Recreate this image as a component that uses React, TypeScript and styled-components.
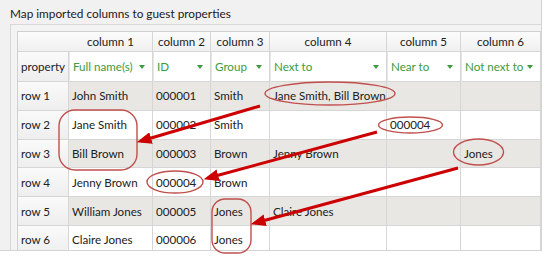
import styled, { createGlobalStyle } from 'styled-components';

const GlobalStyle = createGlobalStyle`
  html, body {
    margin: 0;
    padding: 0;
    background: #ffffff;
  }
  body {
    font-family: Lato, 'Noto Sans', sans-serif;
  }
`;

const Page = styled.div`
  position: relative;
  width: 546px;
  height: 256px;
  overflow: hidden;
  background: #ffffff;
`;

const Dialog = styled.div`
  width: 542px;
  height: 251px;
  overflow: hidden;
  background: #f1f1f1;
  border-right: 1px solid #d4d4d4;
  border-bottom: 1px solid #d4d4d4;
  box-sizing: border-box;
  display: flex;
  flex-direction: column;
`;

const Title = styled.div`
  flex-shrink: 0;
  height: 24px;
  padding: 3px 0 0 10px;
  box-sizing: border-box;
  display: flex;
  align-items: center;
  font-size: 11.8px;
  color: #1a1a1a;
`;

const GroupBox = styled.div`
  flex-shrink: 0;
  margin-left: 10px;
  border-left: 1px solid #d8d8d8;
  border-top: 1px solid #d8d8d8;
  padding: 6px 0 0 6px;
  background: #f3f3f3;
`;

const Grid = styled.div`
  display: grid;
  grid-template-columns: 51px 84px 58px 59px 117px 74px 80px;
  grid-template-rows: 20px 30px repeat(6, 28.8px);
  border-left: 1px solid #d0d0d0;
  border-top: 1px solid #d0d0d0;
  width: 524px;
  box-sizing: border-box;
  font-size: 11.6px;
  color: #222222;
`;

type CellKind = 'corner' | 'colhead' | 'prop' | 'combo' | 'rowhead' | 'body';

const Cell = styled.div<{ $kind: CellKind; $shade?: boolean }>`
  box-sizing: border-box;
  display: flex;
  align-items: center;
  white-space: nowrap;
  overflow: hidden;
  border-bottom: 1px solid #d6d6d6;
  border-right: ${(p) => (p.$kind === 'corner' ? 'none' : '1px solid #d6d6d6')};
  justify-content: ${(p) => (p.$kind === 'colhead' ? 'center' : 'flex-start')};
  padding-left: ${(p) => (p.$kind === 'colhead' ? '0' : '3px')};
  padding-right: ${(p) => (p.$kind === 'combo' ? '7px' : '0')};
  background: ${(p) => {
    if (p.$kind === 'corner' || p.$kind === 'colhead')
      return 'linear-gradient(#fcfcfc, #f0f0f0)';
    if (p.$kind === 'prop' || p.$kind === 'rowhead')
      return 'linear-gradient(#fafafa, #eeeeee)';
    if (p.$kind === 'combo') return '#ffffff';
    return p.$shade ? '#e9e7e4' : '#ffffff';
  }};
  color: ${(p) => (p.$kind === 'combo' ? '#3d9b3d' : '#222222')};
  border-left: ${(p) => (p.$kind === 'combo' ? '1px solid #e6e6e6' : 'none')};
`;

const ComboLabel = styled.span`
  flex: 1;
`;

const Caret = styled.span`
  width: 0;
  height: 0;
  border-left: 3.5px solid transparent;
  border-right: 3.5px solid transparent;
  border-top: 4px solid #3d9b3d;
`;

const Overlay = styled.svg`
  position: absolute;
  left: 0;
  top: 0;
  pointer-events: none;
`;

const columns = ['column 1', 'column 2', 'column 3', 'column 4', 'column 5', 'column 6'];
const mappings = ['Full name(s)', 'ID', 'Group', 'Next to', 'Near to', 'Not next to'];

const rows = [
  ['John Smith', '000001', 'Smith', 'Jane Smith, Bill Brown', '', ''],
  ['Jane Smith', '000002', 'Smith', '', '000004', ''],
  ['Bill Brown', '000003', 'Brown', 'Jenny Brown', '', 'Jones'],
  ['Jenny Brown', '000004', 'Brown', '', '', ''],
  ['William Jones', '000005', 'Jones', 'Claire Jones', '', ''],
  ['Claire Jones', '000006', 'Jones', '', '', ''],
];

const RED = '#cc0000';
const RING = '#c0504d';

const arrows = [
  { x1: 260, y1: 106, x2: 141, y2: 141 },
  { x1: 377, y1: 132, x2: 208, y2: 178 },
  { x1: 458, y1: 168, x2: 255, y2: 223 },
];

const Annotations = () => (
  <Overlay width={546} height={256}>
    <defs>
      <marker id="head" markerWidth="5" markerHeight="4" refX="3.5" refY="2" orient="auto" markerUnits="strokeWidth">
        <path d="M0,0 L5,2 L0,4 Z" fill={RED} />
      </marker>
    </defs>
    <g fill="none" stroke={RING} strokeWidth={1.4}>
      <ellipse cx={330} cy={93.5} rx={65} ry={11.5} />
      <ellipse cx={410.5} cy={125} rx={32} ry={8} />
      <ellipse cx={175} cy={182} rx={28} ry={11} />
      <ellipse cx={478.5} cy={152} rx={25} ry={13} />
      <rect x={59} y={110} width={78} height={60} rx={16} ry={16} />
      <rect x={212} y={199} width={39} height={54} rx={13} ry={13} />
    </g>
    {arrows.map((a, i) => (
      <line key={i} {...a} stroke={RED} strokeWidth={3} markerEnd="url(#head)" />
    ))}
  </Overlay>
);

const App = () => {
  return (
    <Page>
      <GlobalStyle />
      <Dialog>
        <Title>Map imported columns to guest properties</Title>
        <GroupBox>
          <Grid>
            <Cell $kind="corner" />
            {columns.map((c) => (
              <Cell key={c} $kind="colhead">{c}</Cell>
            ))}
            <Cell $kind="prop">property</Cell>
            {mappings.map((m) => (
              <Cell key={m} $kind="combo">
                <ComboLabel>{m}</ComboLabel>
                <Caret />
              </Cell>
            ))}
            {rows.map((r, idx) => (
              <>
                <Cell key={`h${idx}`} $kind="rowhead">row {idx + 1}</Cell>
                {r.map((v, j) => (
                  <Cell key={`${idx}-${j}`} $kind="body" $shade={idx % 2 === 0}>
                    {v}
                  </Cell>
                ))}
              </>
            ))}
          </Grid>
        </GroupBox>
      </Dialog>
      <Annotations />
    </Page>
  );
};

export default App;
